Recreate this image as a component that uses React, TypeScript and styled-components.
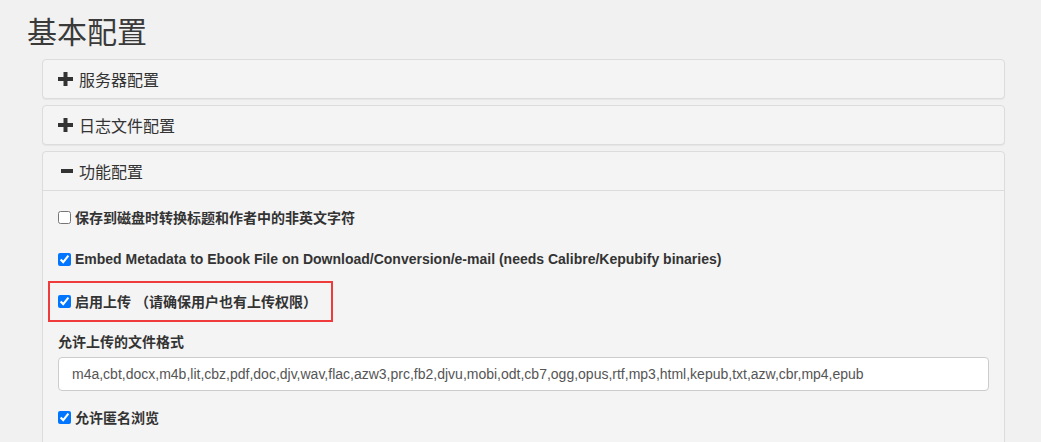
import React from "react";
import styled, { createGlobalStyle } from "styled-components";

const Global = createGlobalStyle`
  html, body { margin: 0; padding: 0; background: #f1f1f1; }
  body {
    font-family: "Liberation Sans", Arial, "Noto Sans CJK SC", sans-serif;
    font-size: 14px;
    color: #333;
    overflow: hidden;
  }
`;

const Page = styled.div`
  padding: 0 36px 0 27px;
`;

const Title = styled.h2`
  margin: 14px 0 12px 0;
  font-size: 30px;
  line-height: 33px;
  font-weight: 400;
  color: #3a3a3a;
  font-family: "Noto Sans CJK SC", sans-serif;
`;

const PanelGroup = styled.div`
  margin-left: 15px;
  display: flex;
  flex-direction: column;
  gap: 6px;
`;

const Panel = styled.div`
  background: #f4f4f4;
  border: 1px solid #dcdcdc;
  border-radius: 4px;
  box-shadow: 0 1px 1px rgba(0, 0, 0, 0.05);
`;

const PanelHeading = styled.div<{ $open?: boolean }>`
  display: flex;
  align-items: center;
  gap: 6px;
  height: 38px;
  padding: 0 15px;
  font-size: 16px;
  color: #333;
  font-family: "Noto Sans CJK SC", sans-serif;
  border-bottom: ${(p) => (p.$open ? "1px solid #dcdcdc" : "none")};
`;

const IconBox = styled.span`
  display: inline-flex;
  width: 15px;
  height: 15px;
  align-items: center;
  justify-content: center;
  svg { display: block; }
`;

const PanelBody = styled.div`
  padding: 16px 15px 20px 15px;
  display: flex;
  flex-direction: column;
`;

const CheckRow = styled.label<{ $gap?: number; $highlight?: boolean }>`
  position: relative;
  display: flex;
  align-items: center;
  gap: 4px;
  height: 20px;
  margin-bottom: ${(p) => p.$gap ?? 22}px;
  font-weight: 700;
  color: #333;
  font-size: 14px;
  ${(p) =>
    p.$highlight &&
    `
    &::after {
      content: "";
      position: absolute;
      left: -10px;
      top: -10px;
      width: 285px;
      height: 41px;
      box-sizing: border-box;
      border: 2px solid #ef3b3b;
      pointer-events: none;
    }
  `}
`;

const Check = styled.input.attrs({ type: "checkbox" })`
  width: 13px;
  height: 13px;
  margin: 0;
  flex: none;
`;

const FieldLabel = styled.div`
  font-weight: 700;
  height: 20px;
  line-height: 20px;
  margin-bottom: 5px;
`;

const TextInput = styled.input`
  box-sizing: border-box;
  width: 100%;
  height: 34px;
  padding: 6px 13px;
  border: 1px solid #cccccc;
  border-radius: 4px;
  background: #fff;
  color: #555;
  font-family: "Liberation Sans", Arial, sans-serif;
  font-size: 14px;
  margin-bottom: 16px;
  outline: none;
`;

const Plus = () => (
  <svg width="15" height="14" viewBox="0 0 15 14">
    <rect x="5.5" y="0" width="4" height="14" fill="#333" />
    <rect x="0" y="5" width="15" height="4" fill="#333" />
  </svg>
);

const Minus = () => (
  <svg width="15" height="14" viewBox="0 0 15 14">
    <rect x="3" y="5" width="12" height="4" fill="#333" />
  </svg>
);

const formats =
  "m4a,cbt,docx,m4b,lit,cbz,pdf,doc,djv,wav,flac,azw3,prc,fb2,djvu,mobi,odt,cb7,ogg,opus,rtf,mp3,html,kepub,txt,azw,cbr,mp4,epub";

export default function App() {
  return (
    <>
      <Global />
      <Page>
        <Title>基本配置</Title>
        <PanelGroup>
          <Panel>
            <PanelHeading>
              <IconBox><Plus /></IconBox>
              服务器配置
            </PanelHeading>
          </Panel>
          <Panel>
            <PanelHeading>
              <IconBox><Plus /></IconBox>
              日志文件配置
            </PanelHeading>
          </Panel>
          <Panel>
            <PanelHeading $open>
              <IconBox><Minus /></IconBox>
              功能配置
            </PanelHeading>
            <PanelBody>
              <CheckRow>
                <Check />
                保存到磁盘时转换标题和作者中的非英文字符
              </CheckRow>
              <CheckRow>
                <Check defaultChecked />
                Embed Metadata to Ebook File on Download/Conversion/e-mail (needs Calibre/Kepubify binaries)
              </CheckRow>
              <CheckRow $highlight $gap={21}>
                <Check defaultChecked />
                启用上传 （请确保用户也有上传权限）
              </CheckRow>
              <FieldLabel>允许上传的文件格式</FieldLabel>
              <TextInput defaultValue={formats} />
              <CheckRow>
                <Check defaultChecked />
                允许匿名浏览
              </CheckRow>
            </PanelBody>
          </Panel>
        </PanelGroup>
      </Page>
    </>
  );
}
